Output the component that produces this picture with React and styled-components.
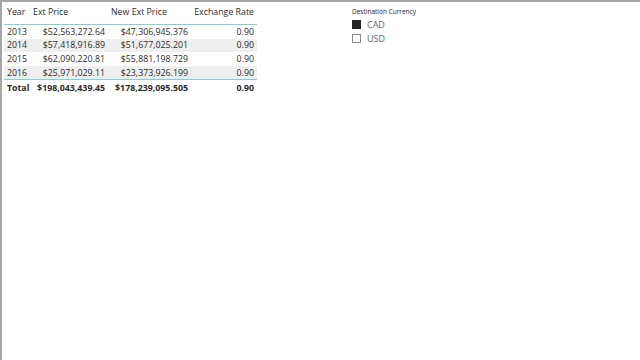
import React from 'react';
import styled, { createGlobalStyle } from 'styled-components';

const GlobalStyle = createGlobalStyle`
	html, body {
		margin: 0;
		padding: 0;
		background: #fff;
	}
	body {
		font-family: "Open Sans", "Noto Sans", sans-serif;
	}
`;

const Canvas = styled.div`
	width: 640px;
	height: 360px;
	box-sizing: border-box;
	border-top: 2px solid #a6a6a6;
	border-left: 2px solid #a6a6a6;
	display: flex;
	align-items: flex-start;
	gap: 95px;
	padding: 1px 0 0 2px;
	overflow: hidden;
`;

const Table = styled.table`
	border-collapse: collapse;
	table-layout: fixed;
	width: 253px;
	font-size: 8.8px;
	color: #2b2b2b;
`;

const HeadCell = styled.th`
	font-weight: 400;
	width: ${p => p.w}px;
	text-align: ${p => (p.right ? 'right' : 'left')};
	padding: 2px 3px 6px 3px;
	height: 13px;
	white-space: nowrap;
	border-bottom: 1px solid #7fd1d4;
`;

const Row = styled.tr`
	background: ${p => (p.shaded ? '#efefef' : 'transparent')};
	border-bottom: ${p => (p.last ? '1px solid #7fd1d4' : 'none')};
`;

const Cell = styled.td`
	text-align: ${p => (p.right ? 'right' : 'left')};
	padding: 0 3px;
	height: 13.6px;
	white-space: nowrap;
`;

const TotalCell = styled(Cell)`
	font-weight: 700;
	padding-top: 1px;
	height: 14px;
`;

const Slicer = styled.div`
	width: 120px;
	padding-top: 4px;
	display: flex;
	flex-direction: column;
`;

const SlicerTitle = styled.div`
	font-size: 6.5px;
	color: #252423;
	margin-bottom: 1px;
`;

const Option = styled.label`
	display: flex;
	align-items: center;
	gap: 6px;
	font-size: 9px;
	color: #666;
	height: 14px;
`;

const Box = styled.span`
	width: 9px;
	height: 9px;
	box-sizing: border-box;
	border: 1px solid ${p => (p.checked ? '#252423' : '#8a8a8a')};
	background: ${p => (p.checked ? '#252423' : '#fff')};
`;

const rows = [
	['2013', '$52,563,272.64', '$47,306,945.376', '0.90'],
	['2014', '$57,418,916.89', '$51,677,025.201', '0.90'],
	['2015', '$62,090,220.81', '$55,881,198.729', '0.90'],
	['2016', '$25,971,029.11', '$23,373,926.199', '0.90'],
];

export default function App() {
	return (
		<>
			<GlobalStyle />
			<Canvas>
				<Table>
					<thead>
						<tr>
							<HeadCell w={20}>Year</HeadCell>
							<HeadCell w={72}>Ext Price</HeadCell>
							<HeadCell w={77}>New Ext Price</HeadCell>
							<HeadCell w={60} right>Exchange Rate</HeadCell>
						</tr>
					</thead>
					<tbody>
						{rows.map((r, i) => (
							<Row key={r[0]} shaded={i % 2 === 1} last={i === rows.length - 1}>
								<Cell>{r[0]}</Cell>
								<Cell right>{r[1]}</Cell>
								<Cell right>{r[2]}</Cell>
								<Cell right>{r[3]}</Cell>
							</Row>
						))}
						<tr>
							<TotalCell>Total</TotalCell>
							<TotalCell right>$198,043,439.45</TotalCell>
							<TotalCell right>$178,239,095.505</TotalCell>
							<TotalCell right>0.90</TotalCell>
						</tr>
					</tbody>
				</Table>
				<Slicer>
					<SlicerTitle>Destination Currency</SlicerTitle>
					<Option><Box checked />CAD</Option>
					<Option><Box />USD</Option>
				</Slicer>
			</Canvas>
		</>
	);
}
